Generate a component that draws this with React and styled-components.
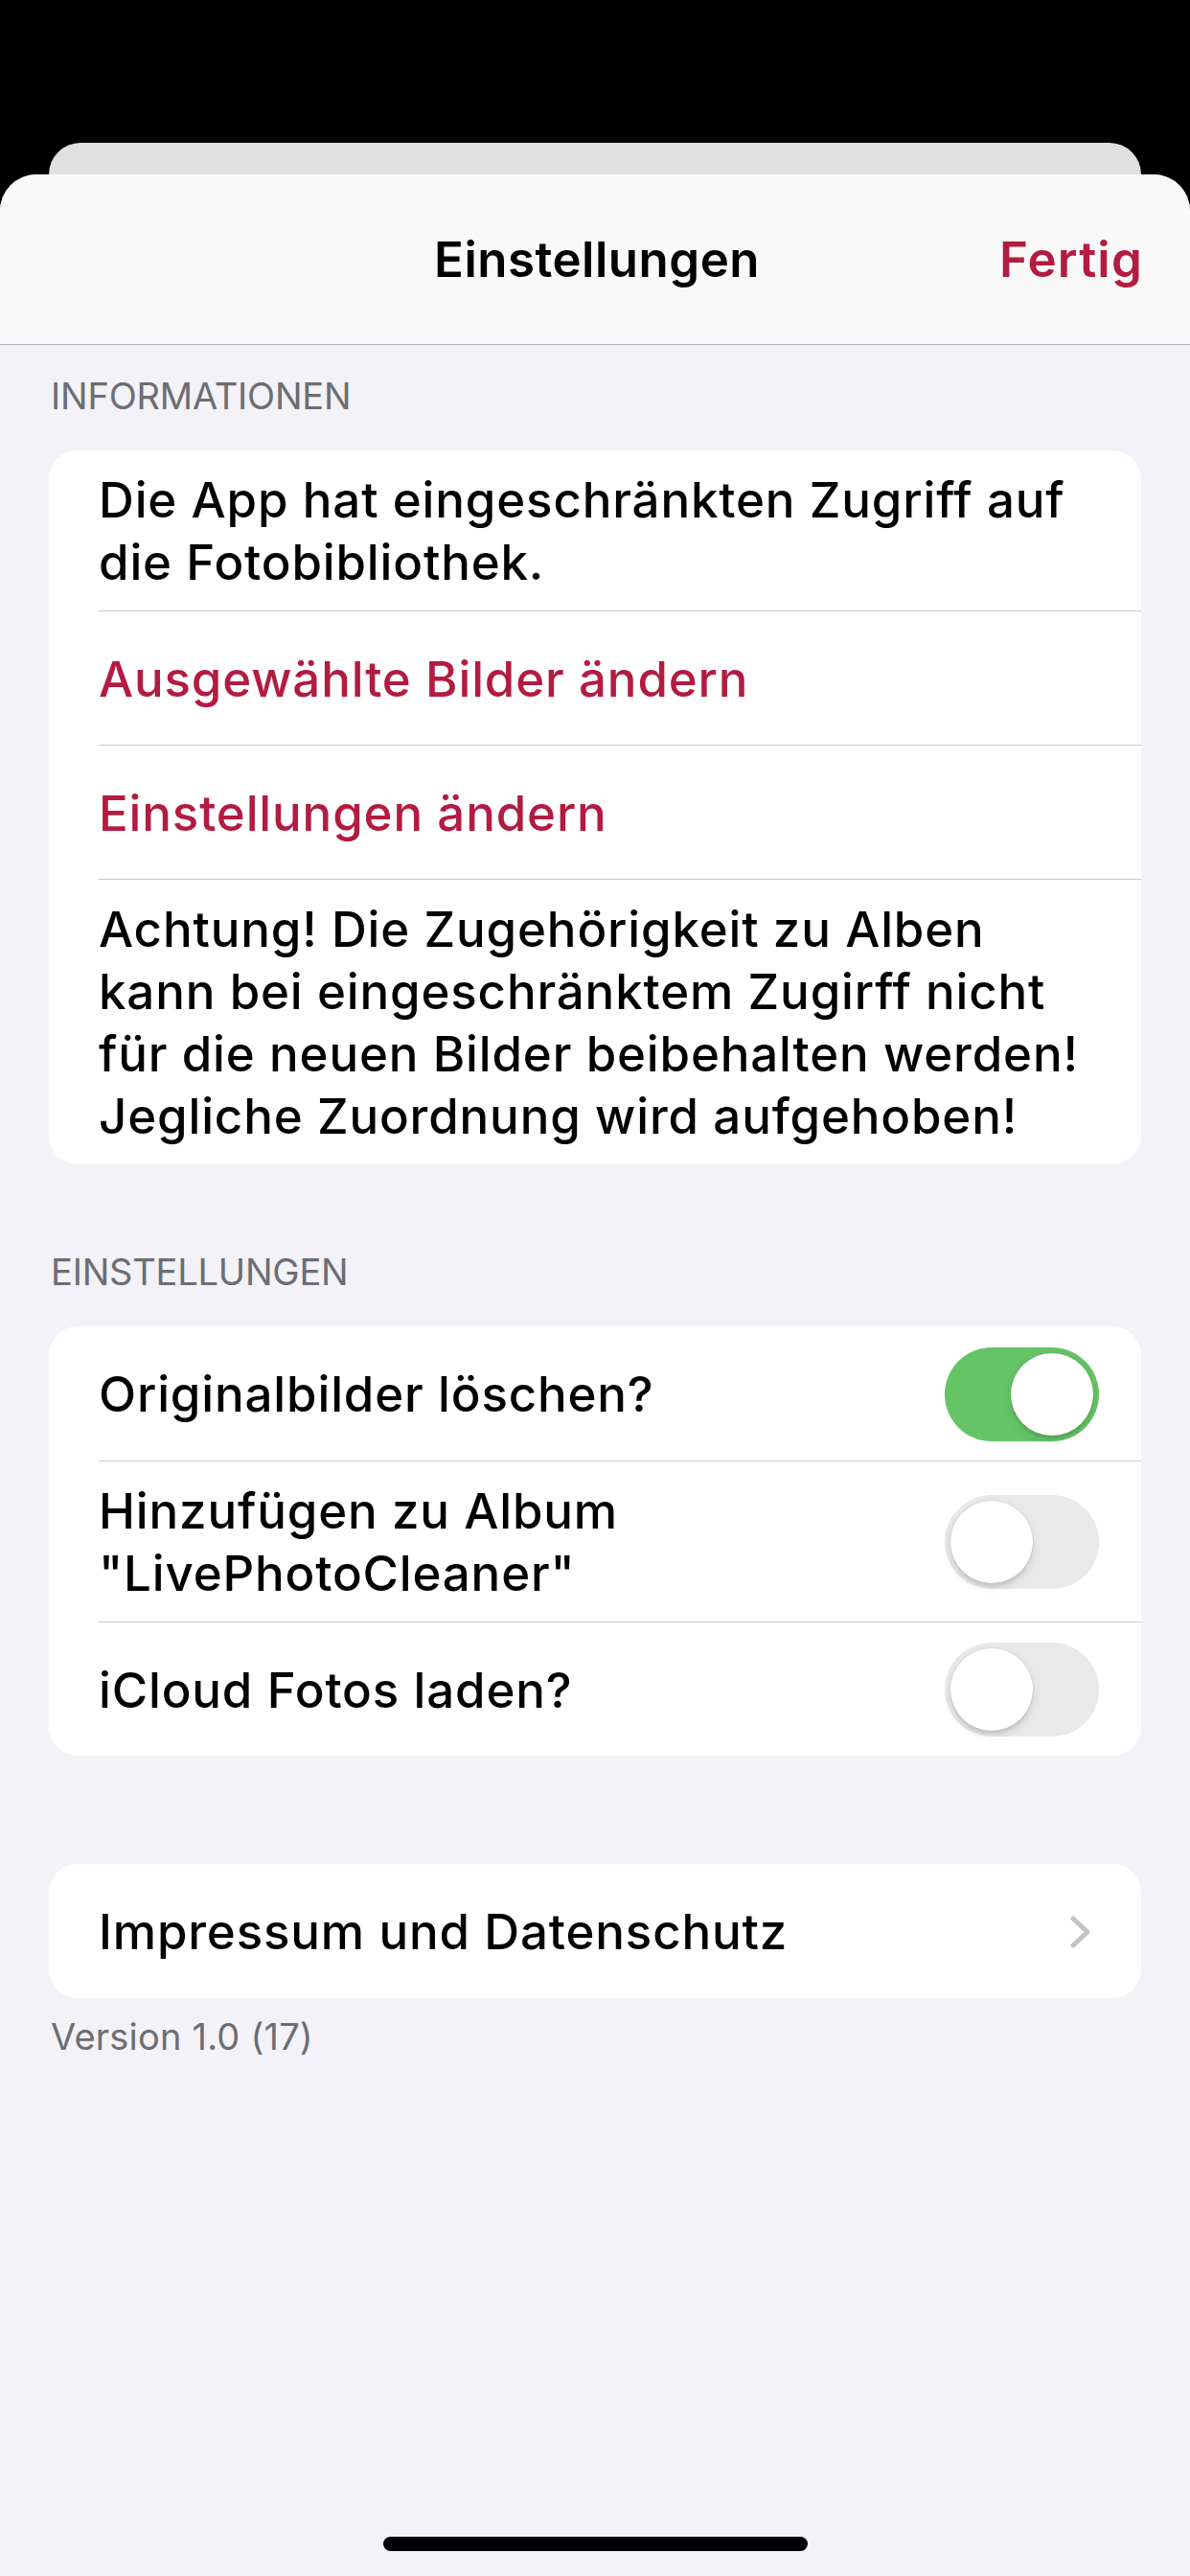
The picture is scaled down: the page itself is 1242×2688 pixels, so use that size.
import React from "react";
import styled, { createGlobalStyle } from "styled-components";

const red = "#B31B40";
const gray = "#6D6D72";

const GlobalStyle = createGlobalStyle`
    html, body {
        margin: 0;
        padding: 0;
        background: #000;
    }
    body {
        font-family: Inter, "Liberation Sans", sans-serif;
        -webkit-font-smoothing: antialiased;
    }
`;

const Screen = styled.div`
    width: 1242px;
    height: 2688px;
    display: flex;
    flex-direction: column;
    background: #000;
    overflow: hidden;
`;

const BackCard = styled.div`
    margin: 149px 51px 0;
    height: 33px;
    background: #e0e0e0;
    border-radius: 36px 36px 0 0;
`;

const Sheet = styled.div`
    flex: 1;
    display: flex;
    flex-direction: column;
    background: #f2f2f7;
    border-radius: 38px 38px 0 0;
    overflow: hidden;
`;

const NavBar = styled.header`
    height: 178px;
    box-sizing: border-box;
    display: grid;
    grid-template-columns: 1fr auto 1fr;
    align-items: center;
    padding: 0 49px 0 53px;
    background: #f9f9f9;
    border-bottom: 1px solid #b4b4b6;
`;

const NavTitle = styled.div`
    font-size: 51px;
    line-height: 65px;
    font-weight: 600;
    letter-spacing: 0.5px;
    color: #000;
`;

const NavButton = styled.div`
    justify-self: end;
    font-size: 51px;
    line-height: 65px;
    font-weight: 600;
    letter-spacing: 1.2px;
    color: ${red};
`;

const Content = styled.main`
    padding: 0 51px;
    display: flex;
    flex-direction: column;
`;

const SectionHeader = styled.div`
    margin: ${props => props.top}px 0 34px 2px;
    font-size: 38px;
    line-height: 46px;
    color: ${gray};
    text-transform: uppercase;
    letter-spacing: -0.2px;
`;

const Card = styled.section`
    margin-top: ${props => props.top || 0}px;
    background: #fff;
    border-radius: 30px;
    overflow: hidden;
`;

const Cell = styled.div`
    margin-left: 52px;
    padding: 19px ${props => props.right || 44}px 18px 0;
    min-height: 140px;
    box-sizing: border-box;
    display: flex;
    align-items: center;
    justify-content: space-between;
    gap: 30px;

    & + & {
        border-top: 1px solid #c8c7cc;
    }
`;

const Label = styled.div`
    font-size: 51px;
    line-height: 65px;
    font-weight: 500;
    letter-spacing: 0.85px;
    white-space: nowrap;
    color: ${props => props.tint ? red : "#000"};
`;

const Track = styled.div`
    flex: none;
    width: 161px;
    height: 98px;
    border-radius: 49px;
    box-sizing: border-box;
    padding: 6px;
    display: flex;
    justify-content: ${props => props.on ? "flex-end" : "flex-start"};
    background: ${props => props.on ? "#65c466" : "#e9e9ea"};
`;

const Knob = styled.div`
    width: 86px;
    height: 86px;
    border-radius: 50%;
    background: #fff;
    box-shadow: 0 4px 10px rgba(0, 0, 0, 0.12), 0 4px 1px rgba(0, 0, 0, 0.05), 0 0 0 1px rgba(0, 0, 0, 0.04);
`;

const Footer = styled.div`
    margin: 17px 0 0 2px;
    font-size: 38px;
    line-height: 46px;
    color: ${gray};
    letter-spacing: 0.2px;
`;

const HomeBar = styled.div`
    margin: auto auto 26px;
    width: 443px;
    height: 15px;
    border-radius: 8px;
    background: #000;
`;

const Toggle = ({ on }) => (
    <Track on={on ? 1 : 0}>
        <Knob />
    </Track>
);

const Chevron = () => (
    <svg width="24" height="36" viewBox="0 0 24 36">
        <polyline points="4,4 19,18 4,32" fill="none" stroke="#c4c4c7" strokeWidth="5" strokeLinecap="round" strokeLinejoin="round" />
    </svg>
);

const settings = [
    { label: <>Originalbilder löschen?</>, on: true },
    { label: <>Hinzufügen zu Album<br />"LivePhotoCleaner"</>, on: false },
    { label: <>iCloud Fotos laden?</>, on: false }
];

export default function App() {
    return (
        <Screen>
            <GlobalStyle />
            <BackCard />
            <Sheet>
                <NavBar>
                    <span />
                    <NavTitle>Einstellungen</NavTitle>
                    <NavButton>Fertig</NavButton>
                </NavBar>
                <Content>
                    <SectionHeader top={30}>Informationen</SectionHeader>
                    <Card>
                        <Cell>
                            <Label>Die App hat eingeschränkten Zugriff auf<br />die Fotobibliothek.</Label>
                        </Cell>
                        <Cell>
                            <Label tint>Ausgewählte Bilder ändern</Label>
                        </Cell>
                        <Cell>
                            <Label tint>Einstellungen ändern</Label>
                        </Cell>
                        <Cell>
                            <Label>
                                Achtung! Die Zugehörigkeit zu Alben<br />
                                kann bei eingeschränktem Zugirff nicht<br />
                                für die neuen Bilder beibehalten werden!<br />
                                Jegliche Zuordnung wird aufgehoben!
                            </Label>
                        </Cell>
                    </Card>

                    <SectionHeader top={89}>Einstellungen</SectionHeader>
                    <Card>
                        {settings.map((item, i) => (
                            <Cell key={`setting-${i}`}>
                                <Label>{item.label}</Label>
                                <Toggle on={item.on} />
                            </Cell>
                        ))}
                    </Card>

                    <Card top={113}>
                        <Cell right={51}>
                            <Label>Impressum und Datenschutz</Label>
                            <Chevron />
                        </Cell>
                    </Card>
                    <Footer>Version 1.0 (17)</Footer>
                </Content>
                <HomeBar />
            </Sheet>
        </Screen>
    );
}
